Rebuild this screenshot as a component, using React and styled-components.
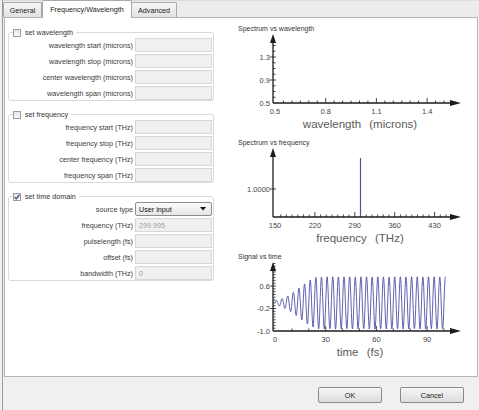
import React from "react";
import styled, { createGlobalStyle } from "styled-components";

const GlobalStyle = createGlobalStyle`
  html, body {
    margin: 0;
    padding: 0;
    background: #f0f0f0;
  }
  body {
    font-family: "Liberation Sans", Arial, sans-serif;
  }
`;

const AXIS = "#1c1c1c";
const WAVE = "#4f4fa6";

const wavelengthRows = [
  "wavelength start (microns)",
  "wavelength stop (microns)",
  "center wavelength (microns)",
  "wavelength span (microns)",
];
const frequencyRows = [
  "frequency start (THz)",
  "frequency stop (THz)",
  "center frequency (THz)",
  "frequency span (THz)",
];
const timeRows = [
  { label: "frequency (THz)", value: "299.995" },
  { label: "pulselength (fs)", value: "" },
  { label: "offset (fs)", value: "" },
  { label: "bandwidth (THz)", value: "0" },
];

const range = (from, to, step) => {
  const out = [];
  for (let v = from; v <= to + 1e-9; v += step) out.push(+v.toFixed(4));
  return out;
};

// signal: 300 THz carrier with a rising envelope
const signalPath = (() => {
  const pts = [];
  for (let t = 0; t <= 101; t += 0.2) {
    const env = t < 27 ? Math.exp(-Math.pow((t - 27) / 17, 2)) : 1;
    const v = 0.93 * env * Math.sin(2 * Math.PI * 0.3 * t);
    pts.push(`${(38 + t * 1.69).toFixed(2)},${(70 - (v + 1) * 28.1).toFixed(2)}`);
  }
  return "M" + pts.join(" L");
})();

const Axes = ({ x0 = 36, y0 = 70 }) => (
  <g>
    <line x1={x0} y1={6} x2={x0} y2={y0} stroke={AXIS} strokeWidth="1.3" />
    <polygon points={`${x0},1 ${x0 - 3},10 ${x0 + 3},10`} fill={AXIS} />
    <line x1={x0} y1={y0} x2={216} y2={y0} stroke={AXIS} strokeWidth="1.3" />
    <polygon points={`224,${y0} 213,${y0 - 3} 213,${y0 + 3}`} fill={AXIS} />
  </g>
);

const XTicks = ({ values, xOf, majors, y0 = 70 }) => (
  <g stroke={AXIS} strokeWidth="0.8">
    {values.map((v) => {
      const big = majors.includes(v);
      return <line key={v} x1={xOf(v)} x2={xOf(v)} y1={y0} y2={y0 - (big ? 5 : 2.5)} />;
    })}
  </g>
);

const YTicks = ({ values, yOf, majors, x0 = 36 }) => (
  <g stroke={AXIS} strokeWidth="0.8">
    {values.map((v) => {
      const big = majors.includes(v);
      return <line key={v} x1={big ? x0 - 3 : x0} x2={x0 + (big ? 3 : 2.5)} y1={yOf(v)} y2={yOf(v)} />;
    })}
  </g>
);

const TickLabels = ({ xs = [], ys = [], xOf, yOf, fmtX = (v) => v, fmtY = (v) => v }) => (
  <g fontSize="7.5" fill="#444" fontFamily="Liberation Sans, Arial, sans-serif">
    {xs.map((v) => (
      <text key={"x" + v} x={xOf(v)} y={80.5} textAnchor="middle">
        {fmtX(v)}
      </text>
    ))}
    {ys.map((v) => (
      <text key={"y" + v} x={33} y={yOf(v) + 2.6} textAnchor="end">
        {fmtY(v)}
      </text>
    ))}
  </g>
);

const AxisTitle = ({ children }) => (
  <text
    x={123}
    y={95}
    textAnchor="middle"
    fontSize="11.5"
    fill="#5a5a5a"
    fontFamily="Liberation Sans, Arial, sans-serif"
    style={{ wordSpacing: "5px" }}
  >
    {children}
  </text>
);

const WavelengthPlot = () => {
  const xOf = (v) => 38 + (v - 0.5) * 169;
  const yOf = (v) => 70 - (v - 0.5) * 57.5;
  const one = (v) => v.toFixed(1);
  return (
    <PlotSvg viewBox="0 0 236 105">
      <XTicks values={range(0.55, 1.5, 0.05)} xOf={xOf} majors={[0.8, 1.1, 1.4]} />
      <YTicks values={range(0.6, 1.5, 0.1)} yOf={yOf} majors={[0.9, 1.3]} />
      <Axes />
      <TickLabels xs={[0.5, 0.8, 1.1, 1.4]} ys={[0.5, 0.9, 1.3]} xOf={xOf} yOf={yOf} fmtX={one} fmtY={one} />
      <AxisTitle>wavelength (microns)</AxisTitle>
    </PlotSvg>
  );
};

const FrequencyPlot = () => {
  const xOf = (f) => 38 + (f - 150) * 0.57;
  const yOf = () => 42;
  return (
    <PlotSvg viewBox="0 0 236 105">
      <XTicks values={range(160, 450, 10)} xOf={xOf} majors={[220, 290, 360, 430]} />
      <YTicks values={[1]} yOf={yOf} majors={[1]} />
      <line x1={xOf(300)} x2={xOf(300)} y1={11} y2={70} stroke={WAVE} strokeWidth="1.2" />
      <Axes />
      <TickLabels xs={[150, 220, 290, 360, 430]} ys={[1]} xOf={xOf} yOf={yOf} fmtY={(v) => v.toFixed(4)} />
      <AxisTitle>frequency (THz)</AxisTitle>
    </PlotSvg>
  );
};

const SignalPlot = () => {
  const xOf = (t) => 38 + t * 1.69;
  const yOf = (v) => 70 - (v + 1) * 28.1;
  return (
    <PlotSvg viewBox="0 0 236 105">
      <XTicks values={range(10, 100, 10)} xOf={xOf} majors={[30, 60, 90]} />
      <YTicks values={range(-0.9, 1.4, 0.1)} yOf={yOf} majors={[-0.2, 0.6]} />
      <path d={signalPath} fill="none" stroke={WAVE} strokeWidth="0.9" />
      <Axes />
      <TickLabels xs={[0, 30, 60, 90]} ys={[-1, -0.2, 0.6]} xOf={xOf} yOf={yOf} fmtY={(v) => v.toFixed(1)} />
      <AxisTitle>time (fs)</AxisTitle>
    </PlotSvg>
  );
};

const Check = ({ checked }) => (
  <CheckBox>
    {checked && (
      <svg width="8" height="8" viewBox="0 0 8 8">
        <path d="M1.6 4.2 L3.2 5.9 L6.4 1.8" fill="none" stroke="#2a3a6a" strokeWidth="1.2" />
      </svg>
    )}
  </CheckBox>
);

const Group = ({ title, checked, children }) => (
  <Fieldset>
    <Legend>
      <Check checked={checked} />
      {title}
    </Legend>
    {children}
  </Fieldset>
);

const App = () => {
  return (
    <>
      <GlobalStyle />
      <Frame>
        <TabBar>
          <Tab w={39}>General</Tab>
          <Tab w={90} active>
            Frequency/Wavelength
          </Tab>
          <Tab w={46}>Advanced</Tab>
        </TabBar>
        <Pane>
          <FormColumn>
            <Group title="set wavelength">
              {wavelengthRows.map((label) => (
                <Row key={label}>
                  <Label>{label}</Label>
                  <Field readOnly value="" />
                </Row>
              ))}
            </Group>
            <Group title="set frequency">
              {frequencyRows.map((label) => (
                <Row key={label}>
                  <Label>{label}</Label>
                  <Field readOnly value="" />
                </Row>
              ))}
            </Group>
            <Group title="set time domain" checked>
              <Row>
                <Label>source type</Label>
                <Select>
                  User input
                  <svg width="6" height="4" viewBox="0 0 6 4">
                    <polygon points="0,0 6,0 3,3.5" fill="#111" />
                  </svg>
                </Select>
              </Row>
              {timeRows.map((r) => (
                <Row key={r.label}>
                  <Label>{r.label}</Label>
                  <Field readOnly value={r.value} />
                </Row>
              ))}
            </Group>
          </FormColumn>
          <ChartColumn>
            <ChartTitle>Spectrum vs wavelength</ChartTitle>
            <WavelengthPlot />
            <ChartTitle>Spectrum vs frequency</ChartTitle>
            <FrequencyPlot />
            <ChartTitle>Signal vs time</ChartTitle>
            <SignalPlot />
          </ChartColumn>
        </Pane>
        <Footer>
          <Button>OK</Button>
          <Button>Cancel</Button>
        </Footer>
      </Frame>
    </>
  );
};

export default App;

const Frame = styled.div`
  width: 477px;
  height: 410px;
  margin-left: 2px;
  border-left: 1px solid #9a9a9a;
  box-sizing: border-box;
  background: #f0f0f0;
  display: flex;
  flex-direction: column;
  font-size: 7.2px;
  color: #333;
`;
const TabBar = styled.div`
  height: 17px;
  display: flex;
  align-items: flex-end;
  background: #ececec;
  border-top: 1px solid #dcdcdc;
  box-sizing: border-box;
`;
const Tab = styled.div`
  box-sizing: border-box;
  width: ${(p) => p.w}px;
  height: ${(p) => (p.active ? 18 : 15)}px;
  margin-bottom: ${(p) => (p.active ? -1 : 0)}px;
  margin-left: ${(p) => (p.active ? 0 : -1)}px;
  position: relative;
  z-index: ${(p) => (p.active ? 1 : 0)};
  border: 1px solid #a9a9a9;
  border-bottom: none;
  border-radius: 2px 2px 0 0;
  background: ${(p) => (p.active ? "#fff" : "linear-gradient(#f6f6f6, #e2e2e2)")};
  display: flex;
  align-items: center;
  justify-content: center;
  color: #222;
  &:first-child {
    margin-left: 0;
  }
`;
const Pane = styled.div`
  box-sizing: border-box;
  width: 474px;
  height: 360px;
  margin-left: 1px;
  border: 1px solid #b5b5b5;
  background: #fff;
  display: grid;
  grid-template-columns: 232px 1fr;
`;
const FormColumn = styled.div`
  padding: 10px 0 0 3px;
  display: flex;
  flex-direction: column;
  gap: 9px;
`;
const Fieldset = styled.fieldset`
  box-sizing: border-box;
  width: 206px;
  margin: 0;
  padding: 1px 1px 0 0;
  border: 1px solid #dadada;
  border-radius: 3px;
  display: flex;
  flex-direction: column;
  gap: 2px;
`;
const Legend = styled.legend`
  margin-left: 4px;
  padding: 0 3px 0 0;
  height: 9px;
  line-height: 9px;
  display: flex;
  align-items: center;
  gap: 4px;
  color: #333;
`;
const CheckBox = styled.span`
  box-sizing: border-box;
  width: 8px;
  height: 8px;
  border: 1px solid #9c9c9c;
  background: linear-gradient(#e4e8ee, #f8f8f8);
  display: flex;
  align-items: center;
  justify-content: center;
  svg {
    margin: -1px;
  }
`;
const Row = styled.div`
  display: grid;
  grid-template-columns: 1fr 77px;
  column-gap: 2px;
  align-items: center;
  height: 14px;
`;
const Label = styled.span`
  text-align: right;
  white-space: nowrap;
  color: #3a3a3a;
`;
const Field = styled.input`
  box-sizing: border-box;
  width: 77px;
  height: 14px;
  margin: 0;
  padding: 0 3px;
  border: 1px solid #d6d6d6;
  background: #f0f0f0;
  font-family: inherit;
  font-size: 7.2px;
  color: #a0a0a0;
  outline: none;
`;
const Select = styled.div`
  box-sizing: border-box;
  height: 14px;
  padding: 0 5px 0 3px;
  border: 1px solid #8d8d8d;
  border-radius: 2px;
  background: linear-gradient(#fbfbfb, #e6e6e6);
  display: flex;
  align-items: center;
  justify-content: space-between;
  color: #111;
`;
const ChartColumn = styled.div`
  padding-top: 6px;
  display: flex;
  flex-direction: column;
`;
const ChartTitle = styled.div`
  height: 9px;
  line-height: 9px;
  padding-left: 1px;
  font-size: 7px;
  color: #333;
  white-space: nowrap;
`;
const PlotSvg = styled.svg`
  display: block;
  width: 236px;
  height: 105px;
`;
const Footer = styled.div`
  flex: 1;
  display: flex;
  justify-content: flex-end;
  align-items: flex-start;
  gap: 18px;
  padding: 10px 15px 0 0;
`;
const Button = styled.button`
  box-sizing: border-box;
  width: 64px;
  height: 16px;
  margin: 0;
  padding: 0;
  border: 1px solid #8a8a8a;
  border-radius: 2px;
  background: linear-gradient(#f7f7f7, #dddddd);
  font-family: inherit;
  font-size: 7.2px;
  color: #222;
`;
